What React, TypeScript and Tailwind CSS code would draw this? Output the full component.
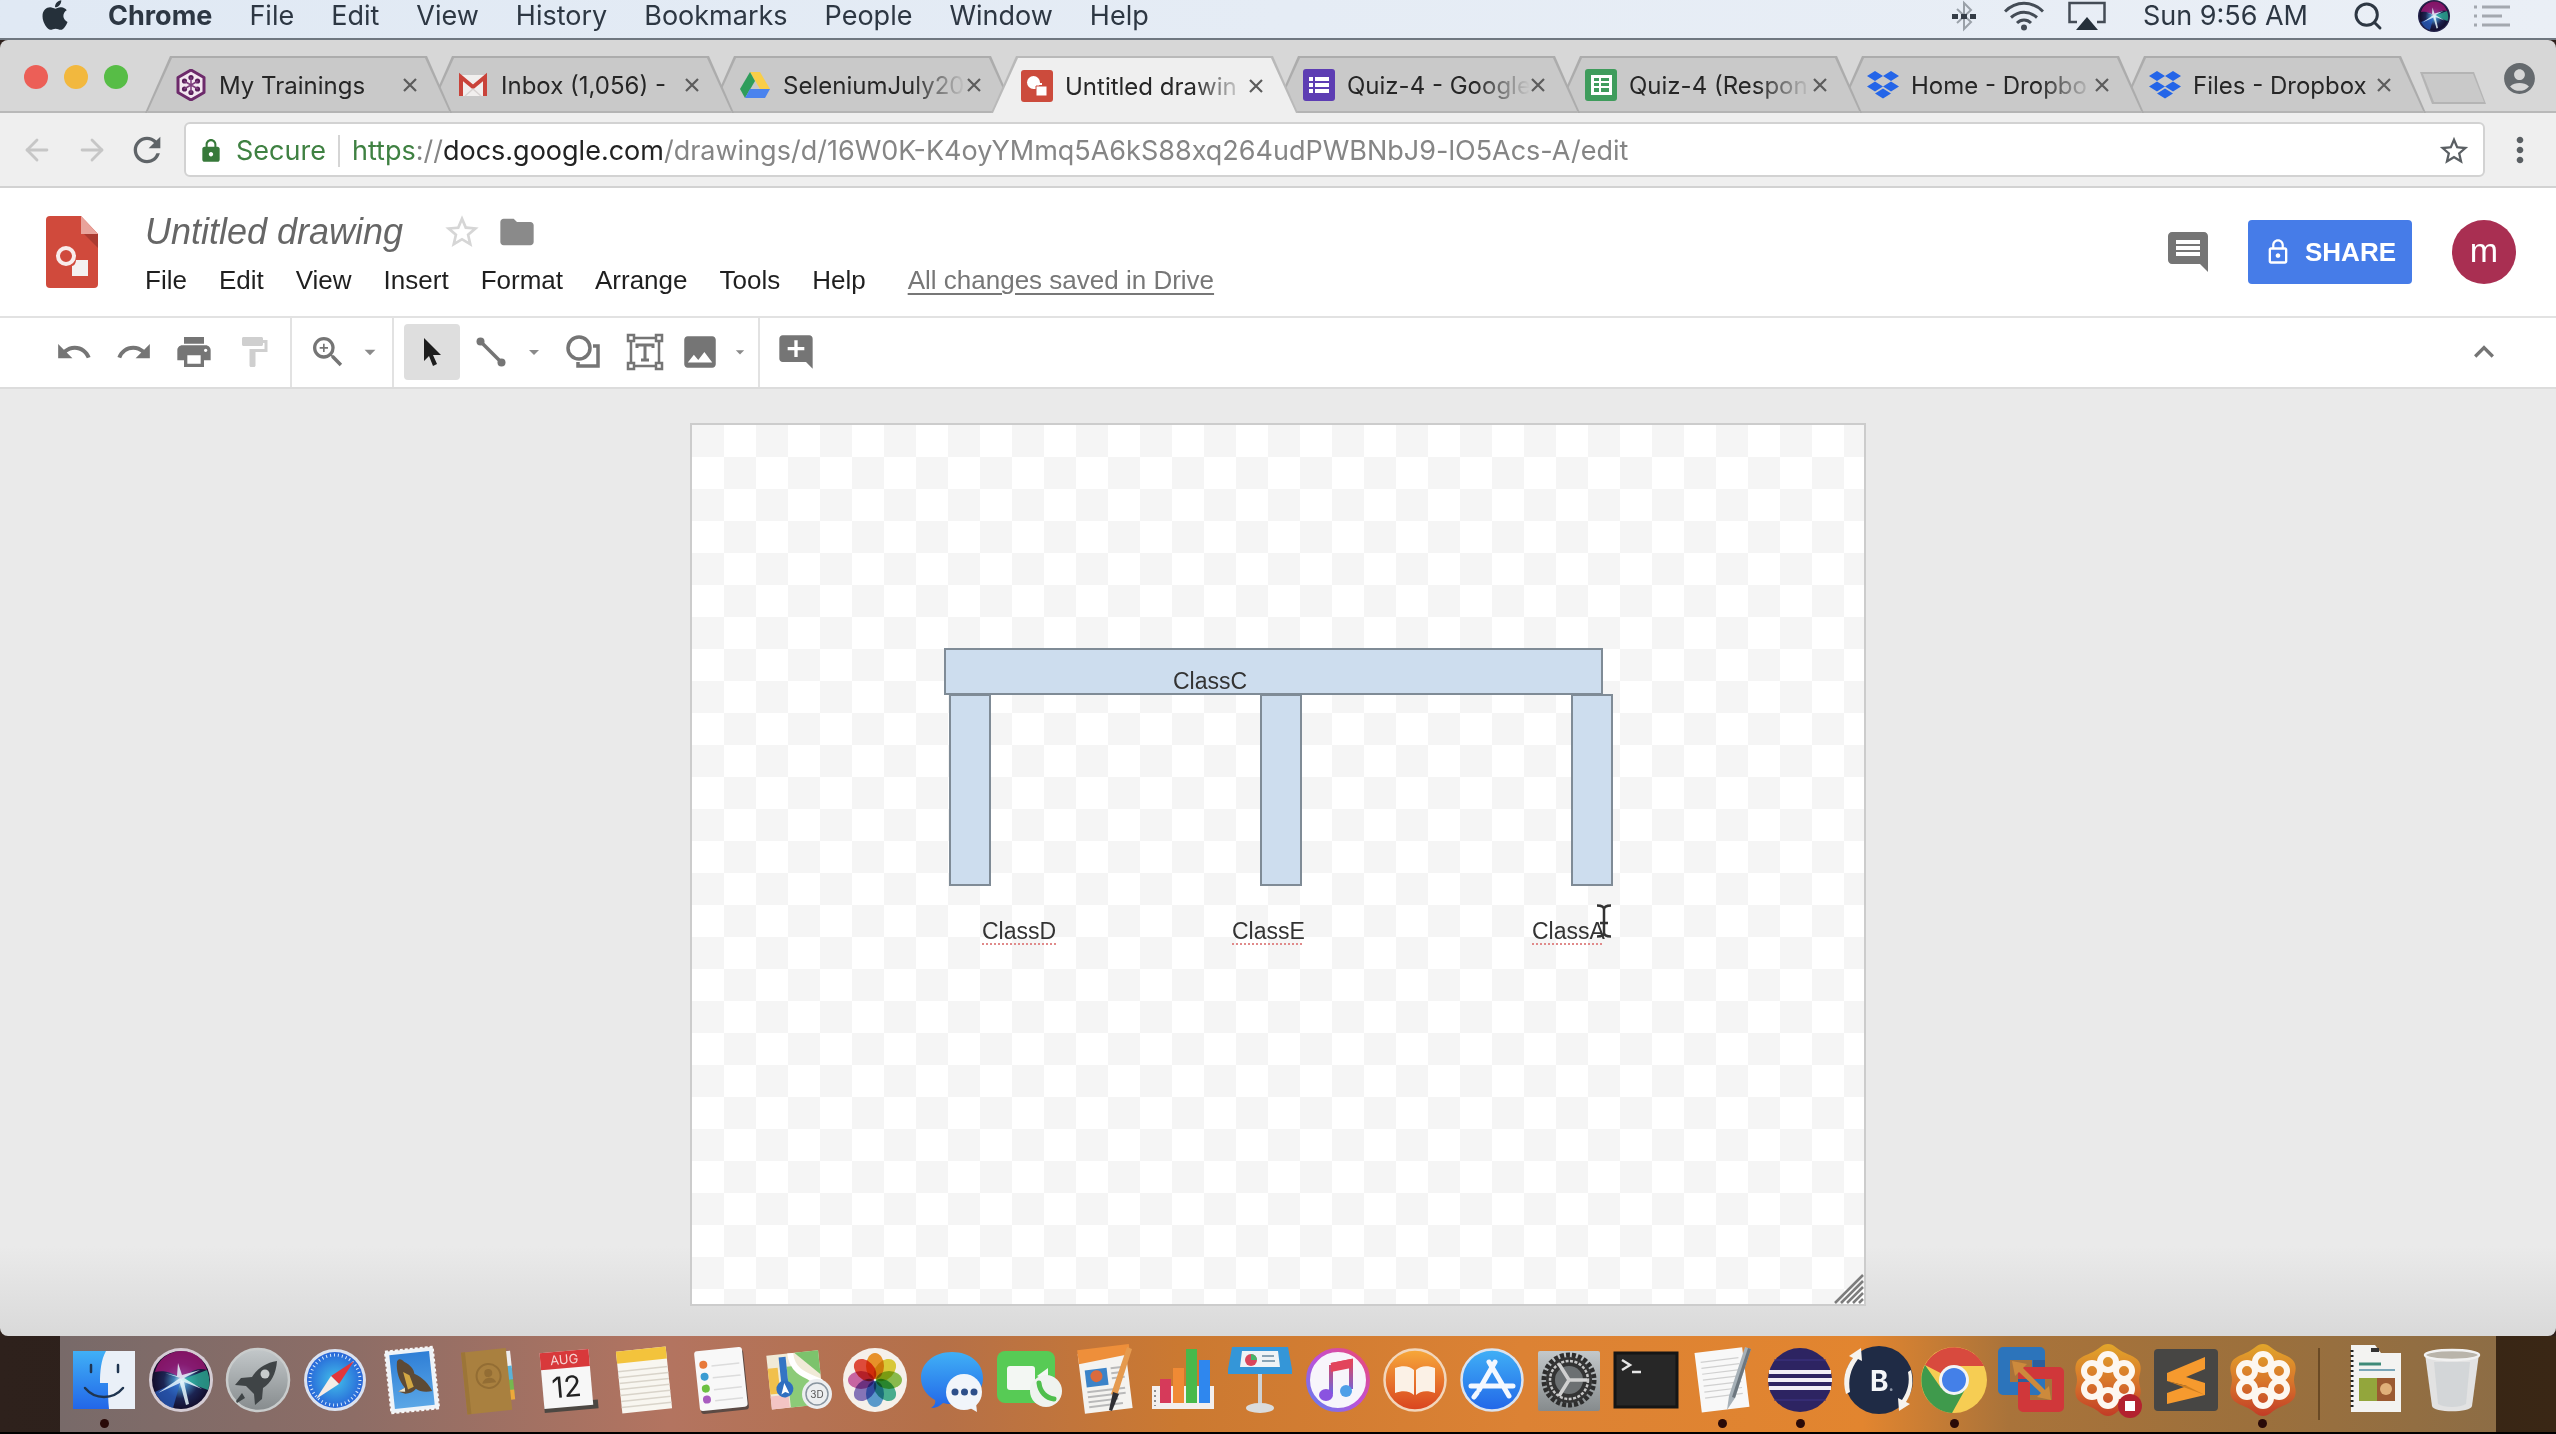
import React from 'react';
import {
  MdUndo, MdRedo, MdPrint, MdFormatPaint, MdZoomIn, MdArrowDropDown, MdPhoto, MdAddComment, MdComment,
  MdLock, MdLockOutline, MdStarBorder, MdFolder, MdRefresh, MdMoreVert, MdAccountCircle, MdKeyboardArrowUp,
} from 'react-icons/md';
import { FaApple } from 'react-icons/fa';
import { ArrowLeft, ArrowRight, Search } from 'lucide-react';

/* ---------- macOS menu bar ---------- */

const SiriOrb = ({ id, rim }: { id: string; rim?: boolean }) => (
  <svg viewBox="0 0 64 64" className="size-full">
    <defs>
      <radialGradient id={id} cx="50%" cy="52%" r="50%">
        <stop offset="0" stopColor="#d9f6ff" />
        <stop offset=".25" stopColor="#3f7fb4" />
        <stop offset=".6" stopColor="#1c2452" />
        <stop offset="1" stopColor="#120c2a" />
      </radialGradient>
    </defs>
    <circle cx="32" cy="32" r="32" fill={rim ? '#d5ccd4' : '#22224a'} />
    <circle cx="32" cy="32" r="29" fill={`url(#${id})`} />
    <path d="M6 24C10 8 24 3 33 3c13 0 22 9 25 19-12-4-18 4-26 9C24 24 14 22 6 24Z" fill="#b3187f" opacity=".7" />
    <path d="M32 32 58 22c3 8 3 14 1 20Z" fill="#2fc0a0" opacity=".7" />
    <path d="M32 32 6 44c4 8 10 14 18 16Z" fill="#2a62c8" opacity=".7" />
    <path d="M31 30 9 45l22-10 6 22 3-1-5-22 18 7-18-11 16-8-18 5-4-12-1 13-12-3Z" fill="#e6f6fc" opacity=".85" />
  </svg>
);

const menuItems = ['File', 'Edit', 'View', 'History', 'Bookmarks', 'People', 'Window', 'Help'];

function MenuBar() {
  return (
    <header className="flex h-[40px] shrink-0 items-center border-b-2 border-[#6f7780] bg-gradient-to-r from-[#e0e9f4] to-[#eaeff6] pr-[46px] pl-[38px] text-[27px] text-[#2d3743]">
      <button aria-label="Apple menu" className="mb-2 w-[34px]">
        <FaApple size={34} color="#25303a" />
      </button>
      <nav className="mb-[6px] ml-[36px] flex items-center gap-[37px] leading-8">
        <button className="font-bold">Chrome</button>
        {menuItems.map((m) => (
          <button key={m}>{m}</button>
        ))}
      </nav>
      <div className="mb-[6px] ml-auto flex items-center leading-8">
        <button aria-label="Bluetooth" className="mr-7">
          <svg viewBox="0 0 24 32" className="h-8 w-6">
            <path d="m5 9 14 13-7 7V3l7 7L5 23" fill="none" stroke="#9aa1a9" strokeWidth="2" />
            <path d="M0 14h6v5H0zM9 14h6v5H9zM18 14h6v5h-6z" fill="#353d47" />
          </svg>
        </button>
        <button aria-label="Wi-Fi" className="mr-6">
          <svg viewBox="0 0 40 30" className="h-[30px] w-10" fill="none" stroke="#444c56" strokeWidth="3">
            <path d="M1 10.500c11-11 27-11 38 0M7 16.500c8-7 18-7 26 0M13 22c4-4 10-4 14 0" />
            <circle cx="20" cy="26.500" r="3" fill="#444c56" stroke="none" />
          </svg>
        </button>
        <button aria-label="AirPlay" className="mr-[37px]">
          <svg viewBox="0 0 38 30" className="h-[30px] w-[38px]">
            <path d="M9 21H1.500V2h35v19H29" fill="none" stroke="#444c56" strokeWidth="2.500" />
            <path d="m19 16 11 13H8Z" fill="#25303a" />
          </svg>
        </button>
        <button>Sun 9:56 AM</button>
        <button aria-label="Spotlight" className="ml-11">
          <Search size={32} strokeWidth={2.200} />
        </button>
        <button aria-label="Siri" className="ml-[34px] size-8">
          <SiriOrb id="siri-menu" />
        </button>
        <button aria-label="Notification Center" className="ml-6">
          <svg viewBox="0 0 36 24" className="h-6 w-9" stroke="#a3a8af" strokeWidth="3">
            <path d="M0 3h3M8 3h28M0 12h3M8 12h20M0 21h3M8 21h28" />
          </svg>
        </button>
      </div>
    </header>
  );
}

/* ---------- Browser tab icons ---------- */

const fav = {
  training: (
    <svg viewBox="0 0 32 32">
      <path d="m16 1 13 7.500v15L16 31 3 23.500v-15Z" fill="#f3e6f0" stroke="#6d2a6b" strokeWidth="3" strokeLinejoin="round" />
      <g fill="#5a1f5c">
        <circle cx="16" cy="8.500" r="2.600" /><circle cx="16" cy="23.500" r="2.600" /><circle cx="9.500" cy="12" r="2.600" />
        <circle cx="22.500" cy="12" r="2.600" /><circle cx="9.500" cy="20" r="2.600" /><circle cx="22.500" cy="20" r="2.600" />
      </g>
      <path d="M16 8v16M9 12l14 8M23 12 9 20" stroke="#7d3d7c" strokeWidth="1.500" />
    </svg>
  ),
  gmail: (
    <svg viewBox="0 0 32 32">
      <path d="M2 6h28v21H2z" fill="#f1efee" />
      <path d="M4 27V8l12 10L28 8v19" fill="none" stroke="#c9433a" strokeWidth="4" />
      <path d="m8 27 8-7 8 7" fill="none" stroke="#d8d3d2" strokeWidth="1.500" />
    </svg>
  ),
  drive: (
    <svg viewBox="0 0 32 32">
      <path d="M11 3h10l10 17H21Z" fill="#f9ce48" />
      <path d="M11 3 1 20l5 9 10-17Z" fill="#2f9d5b" />
      <path d="M11 20h20l-5 9H6Z" fill="#4a83ee" />
    </svg>
  ),
  drawing: (
    <svg viewBox="0 0 32 32">
      <rect width="32" height="32" rx="3" fill="#cc4b3c" />
      <circle cx="12.500" cy="12.500" r="6.500" fill="#fff" />
      <path d="M12 13v6h3v-4h6v-2" fill="#fff" />
      <path d="M15 16h11v10H15z" fill="#fff" stroke="#cc4b3c" strokeWidth="1" />
    </svg>
  ),
  form: (
    <svg viewBox="0 0 32 32">
      <rect width="32" height="32" rx="3" fill="#5d3db3" />
      <path d="M6 8h4v4H6zM12 8h14v4H12zM6 14h4v4H6zM12 14h14v4H12zM6 20h4v4H6zM12 20h14v4H12z" fill="#fff" />
    </svg>
  ),
  sheet: (
    <svg viewBox="0 0 32 32">
      <rect width="32" height="32" rx="3" fill="#3f9c5c" />
      <path d="M6 6h21v20H6z" fill="#fff" />
      <path d="M9 9h5v3H9zM16 9h8v3h-8zM9 14h5v3H9zM16 14h8v3h-8zM9 19h5v4H9zM16 19h8v4h-8z" fill="#3f9c5c" />
    </svg>
  ),
  dropbox: (
    <svg viewBox="0 0 32 32" fill="#2465e8">
      <path d="M8 2l8 5-8 5-8-5ZM24 2l8 5-8 5-8-5ZM8 12.500l8 5-8 5-8-5ZM24 12.500l8 5-8 5-8-5ZM16 19.500l8 5-8 5-8-5Z" />
    </svg>
  ),
};

const fade = '[mask-image:linear-gradient(to_right,#000_70%,transparent)]';

const tabs = [
  { icon: fav.training, label: 'My Trainings', z: 'z-[8]' },
  { icon: fav.gmail, label: 'Inbox (1,056) -', z: 'z-[7]' },
  { icon: fav.drive, label: 'SeleniumJuly20', z: 'z-[6]', long: true },
  { icon: fav.drawing, label: 'Untitled drawin', z: 'z-[9]', active: true, long: true },
  { icon: fav.form, label: 'Quiz-4 - Google', z: 'z-[5]', long: true },
  { icon: fav.sheet, label: 'Quiz-4 (Respon', z: 'z-[4]', long: true },
  { icon: fav.dropbox, label: 'Home - Dropbo', z: 'z-[3]', long: true },
  { icon: fav.dropbox, label: 'Files - Dropbox', z: 'z-[2]' },
];

const tabClip = '[clip-path:polygon(25px_0,calc(100%-25px)_0,100%_100%,0_100%)]';

function Tab({ icon, label, z, active, long }: { icon: React.ReactNode; label: string; z: string; active?: boolean; long?: boolean }) {
  return (
    <div className={`relative -mr-[25px] h-[57px] w-[307px] min-w-0 px-[2px] pt-[2px] ${z} ${tabClip} ${active ? 'bg-[#b9b9b9]' : 'bg-[#acacac]'}`}>
      <div className={`flex h-full items-center pr-[32px] pl-[28px] ${tabClip} ${active ? 'bg-[#efefef]' : 'border-b-2 border-[#b4b4b4] bg-[#c9c9c9]'}`}>
        <span className="size-8 shrink-0">{icon}</span>
        <button className={`mt-[2px] ml-3 min-w-0 flex-1 text-left text-[24px] leading-8 whitespace-nowrap text-[#262626] ${long ? fade : ''}`}>
          {label}
        </button>
        <button aria-label={`Close ${label}`} className="shrink-0">
          <svg viewBox="0 0 16 16" className="size-4" stroke="#5c5c5c" strokeWidth="2.200">
            <path d="m2 2 12 12M14 2 2 14" />
          </svg>
        </button>
      </div>
    </div>
  );
}

function BrowserChrome() {
  return (
    <div className="shrink-0 rounded-t-lg bg-[#d7d7d7]">
      <div className="flex h-[73px] items-end border-b-2 border-[#b9b9b9]">
        <div className="mb-[22px] ml-6 flex gap-4">
          <button aria-label="Close window" className="size-6 rounded-full bg-[#ec5f57]" />
          <button aria-label="Minimise window" className="size-6 rounded-full bg-[#f2b83e]" />
          <button aria-label="Zoom window" className="size-6 rounded-full bg-[#57bd46]" />
        </div>
        <div className="-mb-[2px] ml-[17px] flex">
          {tabs.map((t) => (
            <Tab key={t.label} {...t} />
          ))}
        </div>
        <button aria-label="New tab" className="mb-[7px] ml-[19px] h-8 w-[66px] bg-[#b4b4b4] p-[2px] [clip-path:polygon(0_0,54px_0,100%_100%,12px_100%)]">
          <span className="block size-full bg-[#c9c9c9] [clip-path:polygon(1px_0,51px_0,100%_100%,12px_100%)]" />
        </button>
        <button aria-label="Profile" className="mr-[18px] mb-[14px] ml-auto">
          <MdAccountCircle size={37} color="#656a6e" />
        </button>
      </div>
      <div className="flex h-[75px] items-center border-b-2 border-[#d2d2d2] bg-[#efefef]">
        <button aria-label="Back" className="ml-[20px]"><ArrowLeft size={34} strokeWidth={2} color="#c6c6c6" /></button>
        <button aria-label="Forward" className="ml-[21px]"><ArrowRight size={34} strokeWidth={2} color="#c6c6c6" /></button>
        <button aria-label="Reload" className="ml-[18px]"><MdRefresh size={40} color="#5f6468" /></button>
        <div className="ml-[17px] flex h-[55px] flex-1 items-center rounded-md border-2 border-[#d2d2d2] bg-white pt-[2px] pr-3 pl-3 text-[27px] leading-9">
          <MdLock size={26} color="#37793a" />
          <span className="ml-3 text-[#3f8142]">Secure</span>
          <span className="ml-3 h-8 w-[2px] bg-[#d5d5d5]" />
          <div
            contentEditable
            suppressContentEditableWarning
            role="textbox"
            aria-label="Address"
            className="ml-3 flex-1 whitespace-nowrap text-[#858585]"
          >
            <span className="text-[#3f8142]">https</span>://<span className="text-[#222]">docs.google.com</span>
            /drawings/d/16W0K-K4oyYMmq5A6kS88xq264udPWBNbJ9-lO5Acs-A/edit
          </div>
          <button aria-label="Bookmark this page"><MdStarBorder size={34} color="#5a5f63" /></button>
        </div>
        <button aria-label="Browser menu" className="mr-[16px] ml-[15px]"><MdMoreVert size={40} color="#5a5f63" /></button>
      </div>
    </div>
  );
}

/* ---------- Drawings application ---------- */

const docMenus = ['File', 'Edit', 'View', 'Insert', 'Format', 'Arrange', 'Tools', 'Help'];

function DocHeader() {
  return (
    <div className="flex h-[130px] shrink-0 items-start border-b-2 border-[#e2e2e2] bg-white font-['Liberation_Sans',Arial,sans-serif]">
      <svg viewBox="0 0 52 72" className="mt-7 ml-[46px] h-[72px] w-[52px]">
        <path d="M4 0h31l17 18v50a4 4 0 0 1-4 4H4a4 4 0 0 1-4-4V4a4 4 0 0 1 4-4Z" fill="#d04a3c" />
        <path d="M35 0 52 18H35Z" fill="#e9a39b" />
        <path d="M38 18h14v14Z" fill="#ab3b31" />
        <circle cx="20" cy="40" r="8" fill="none" stroke="#f8eceb" strokeWidth="4" />
        <path d="M30 44h12v16H26V50c2 0 4-3 4-6Z" fill="#f4f1f0" />
      </svg>
      <div className="mt-[21px] ml-[47px]">
        <div className="flex h-[46px] items-center">
          <input aria-label="Document name" defaultValue="Untitled drawing" className="w-[294px] bg-transparent p-0 text-[36px] leading-[46px] text-[#666] italic outline-none" />
          <button aria-label="Star" className="ml-[3px]"><MdStarBorder size={40} color="#d6d6d6" /></button>
          <button aria-label="Move to folder" className="ml-[15px]"><MdFolder size={40} color="#8a8a8a" /></button>
        </div>
        <nav className="mt-[9px] flex gap-8 text-[26px] leading-8 text-[#1f1f1f]">
          {docMenus.map((m) => (
            <button key={m}>{m}</button>
          ))}
          <a href="#history" className="ml-[10px] text-[#777] underline decoration-2 underline-offset-4">All changes saved in Drive</a>
        </nav>
      </div>
      <div className="mt-[32px] mr-[40px] ml-auto flex items-center">
        <button aria-label="Comments" className="mr-[36px]"><MdComment size={48} color="#757575" /></button>
        <button className="flex h-16 items-center rounded-sm bg-[#467ce8] pr-4 pl-4 text-[26px] leading-8 font-bold text-white">
          <MdLockOutline size={28} className="mr-[13px]" />
          SHARE
        </button>
        <button aria-label="Account" className="ml-10 size-16 rounded-full bg-[#a92f52] pb-1 text-[34px] leading-10 text-white">m</button>
      </div>
    </div>
  );
}

const grey = '#757575';
const Drop = () => <MdArrowDropDown size={26} color="#8a8a8a" />;
const tool = 'flex h-14 items-center justify-center';

function Toolbar() {
  return (
    <div className="flex h-[71px] shrink-0 items-stretch border-b-2 border-[#dcdcdc] bg-white pb-[2px]">
      <div className="-mb-[2px] flex items-center border-r-2 border-[#e2e2e2] pr-[6px] pb-[2px] pl-11">
        <button aria-label="Undo" className={`${tool} w-[60px]`}><MdUndo size={38} color={grey} /></button>
        <button aria-label="Redo" className={`${tool} w-[60px]`}><MdRedo size={38} color={grey} /></button>
        <button aria-label="Print" className={`${tool} w-[60px]`}><MdPrint size={40} color={grey} /></button>
        <button aria-label="Paint format" className={`${tool} w-[60px]`}><MdFormatPaint size={36} color="#cfcfcf" /></button>
      </div>
      <div className="-mb-[2px] flex items-center border-r-2 border-[#e2e2e2] px-2 pb-[2px]">
        <button aria-label="Zoom" className={`${tool} w-14`}><MdZoomIn size={40} color={grey} /></button>
        <button aria-label="Zoom options" className={`${tool} w-7`}><Drop /></button>
      </div>
      <div className="-mb-[2px] flex items-center border-r-2 border-[#e2e2e2] pr-2 pb-[2px] pl-[10px]">
        <button aria-label="Select" className={`${tool} w-14 rounded-sm bg-[#dedede]`}>
          <svg viewBox="0 0 20 30" className="h-[30px] w-5"><path d="M2 1v23l5-5 4 10 4-2-4-9h8Z" fill="#1d1d1d" /></svg>
        </button>
        <button aria-label="Line" className={`${tool} w-[62px]`}>
          <svg viewBox="0 0 30 30" className="size-[30px]">
            <path d="m4 4 22 22" stroke={grey} strokeWidth="3.500" />
            <circle cx="4.500" cy="4.500" r="4" fill={grey} /><circle cx="25.500" cy="25.500" r="4" fill={grey} />
          </svg>
        </button>
        <button aria-label="Line options" className={`${tool} w-6`}><Drop /></button>
        <button aria-label="Shape" className={`${tool} w-[74px]`}>
          <svg viewBox="0 0 34 34" className="size-[34px]" fill="none" stroke={grey} strokeWidth="3.500">
            <circle cx="13" cy="13" r="11" />
            <path d="M27 11h5v20H12v-4" />
          </svg>
        </button>
        <button aria-label="Text box" className={`${tool} w-[50px]`}>
          <svg viewBox="0 0 38 38" className="size-[38px]" fill="none" stroke={grey} strokeWidth="2.500">
            <path d="M5 5h28v28H5z" />
            <path d="M11 15v-3h16v3M19 12v15M15 27h8" strokeWidth="3" />
            <path d="M2 2h6v6H2zM30 2h6v6h-6zM2 30h6v6H2zM30 30h6v6h-6z" fill="#fff" />
          </svg>
        </button>
        <button aria-label="Image" className={`${tool} w-[60px]`}><MdPhoto size={42} color={grey} /></button>
        <button aria-label="Image options" className={`${tool} w-5`}><Drop /></button>
      </div>
      <button aria-label="Add comment" className={`${tool} w-[72px] self-center`}><MdAddComment size={40} color={grey} /></button>
      <button aria-label="Hide menus" className="mr-[52px] ml-auto"><MdKeyboardArrowUp size={40} color="#757575" /></button>
    </div>
  );
}

const shape = 'absolute border-2 border-[#7f8b96] bg-[#cdddee]';
const label = 'absolute text-[23px] leading-7 text-[#333]';
const misspelt = 'underline decoration-[#e08a8a] decoration-dotted decoration-2 underline-offset-4';

function Canvas() {
  return (
    <main className="flex-1 rounded-b-lg bg-[linear-gradient(to_top,#d9d9d9,#eaeaea_90px)] pt-[34px] pb-[30px] font-['Liberation_Sans',Arial,sans-serif]">
      <div className="relative mx-auto h-[883px] w-[1176px] border-2 border-[#cccccc] bg-[repeating-conic-gradient(#fff_0_25%,#f5f5f5_0_50%)] bg-[length:64px_64px]">
        <div className={`${shape} top-[223px] left-[252px] h-[47px] w-[659px]`} />
        <div className={`${shape} top-[269px] left-[257px] h-[192px] w-[42px]`} />
        <div className={`${shape} top-[269px] left-[568px] h-[192px] w-[42px]`} />
        <div className={`${shape} top-[269px] left-[879px] h-[192px] w-[42px]`} />
        <span className={`${label} top-[242px] left-[481px]`}>ClassC</span>
        <span className={`${label} ${misspelt} top-[492px] left-[290px]`}>ClassD</span>
        <span className={`${label} ${misspelt} top-[492px] left-[540px]`}>ClassE</span>
        <span className={`${label} ${misspelt} top-[492px] left-[840px]`}>ClassA</span>
        <svg viewBox="0 0 16 34" className="absolute top-[479px] left-[904px] h-[34px] w-4" fill="none" stroke="#333" strokeWidth="2.500">
          <path d="M1 1.500c4 0 7 1 7 4 0-3 3-4 7-4M8 5v24M4 19h8M1 32.500c4 0 7-1 7-4 0 3 3 4 7 4" />
        </svg>
        <svg viewBox="0 0 30 30" className="absolute right-0 bottom-0 size-[30px]" stroke="#7d7d7d" strokeWidth="2.500">
          <path d="M1 29 29 1M7 29 29 7M13 29l16-16M19 29l10-10M25 29l4-4" />
        </svg>
      </div>
    </main>
  );
}

/* ---------- Dock ---------- */

const Gear = () => (
  <>
    <circle cx="32" cy="32" r="25" fill="none" stroke="#2d2d2d" strokeWidth="5" strokeDasharray="4 2" />
    <circle cx="32" cy="32" r="23" fill="#333" />
    <circle cx="32" cy="32" r="19" fill="none" stroke="#c6c6c6" strokeWidth="2.500" strokeDasharray="3 1.500" />
    <circle cx="32" cy="32" r="14" fill="#6c7072" />
    <path d="M32 32 22 16M32 32h18M32 32 22 48" stroke="#d0d0d0" strokeWidth="3.500" />
  </>
);

const Petals = ({ badge }: { badge?: boolean }) => (
  <>
    <path d="M32-4c6 0 9 5 15 8s15 5 17 12-1 10-1 16 3 9 1 16-11 9-17 12-9 8-15 8-9-5-15-8S2 55 0 48s1-10 1-16-3-9-1-16S11 7 17 4s9-8 15-8Z" fill="url(#goto)" />
    <g fill="none" stroke="#fdf7f0" strokeWidth="6">
      <circle cx="32" cy="14" r="8" /><circle cx="32" cy="50" r="8" />
      <circle cx="16" cy="23" r="8" /><circle cx="48" cy="23" r="8" />
      <circle cx="16" cy="41" r="8" /><circle cx="48" cy="41" r="8" />
    </g>
    {badge && (
      <>
        <circle cx="54" cy="58" r="12" fill="#b3222f" />
        <path d="M49 53h10v10H49z" fill="#fff" />
      </>
    )}
  </>
);

const dock: { name: string; running?: boolean; art: React.ReactNode }[] = [
  { name: 'Finder', running: true, art: (<>
    <path d="M1 3h62v58H1z" fill="#eaf0f8" />
    <path d="M1 3h33c-5 9-6 20-6 32h8c0 9 0 18 1 26H1Z" fill="url(#finder)" />
    <path d="M13 40c10 12 28 12 38 0M19 17v7M46 17v7" fill="none" stroke="#1f3550" strokeWidth="2.500" strokeLinecap="round" />
  </>) },
  { name: 'Siri', art: <g><SiriOrb id="siri-dock" rim /></g> },
  { name: 'Launchpad', art: (<>
    <circle cx="32" cy="32" r="31" fill="url(#silver)" stroke="#c9cccc" strokeWidth="2.500" />
    <path d="M51 13c-12 2-20 8-25 16l-11 1-6 7 11 1 8 8 1 11 7-6 1-11c8-5 13-14 14-27ZM16 45l-6 8 1 2 8-5Z" fill="#3f4446" />
    <circle cx="39" cy="26" r="4.500" fill="#c7cccc" />
  </>) },
  { name: 'Safari', art: (<>
    <circle cx="32" cy="32" r="31" fill="#dbe2f0" />
    <circle cx="32" cy="32" r="28" fill="url(#safari)" />
    <circle cx="32" cy="32" r="25" fill="none" stroke="#d7e9fa" strokeWidth="3" strokeDasharray="1 3" />
    <path d="m51 13-15 23-8-8Z" fill="#e2363b" /><path d="m13 51 15-23 8 8Z" fill="#f5ece6" />
  </>) },
  { name: 'Mail', art: (<g transform="rotate(-6 32 32)">
    <path d="M8 1h48v62H8z" fill="#eef3f8" stroke="#f7f7f7" strokeWidth="2" strokeDasharray="3 2" />
    <path d="M12 5h40v54H12z" fill="url(#sky)" />
    <path d="M19 12c2-3 5-2 7 1 6 4 9 8 9 13 8 5 13 11 16 19-7 1-13-1-16-4-3 3-7 4-11 4l-7-3 7-3c-5-8-7-17-5-27Z" fill="#5d4a35" />
    <path d="m24 23 6 4 3 12-6 2Z" fill="#d2a743" /><path d="m17 42 7-3v4Z" fill="#efe5cd" />
  </g>) },
  { name: 'Contacts', art: (<g transform="rotate(-6 32 32)">
    <path d="M50 5h6v18h-6z" fill="#eee" /><path d="M50 20h6v14h-6z" fill="#5bb2d8" /><path d="M50 34h6v14h-6z" fill="#76b84f" /><path d="M50 44h6v10h-6z" fill="#eda93a" />
    <path d="M7 2h45v62H7z" fill="#a9803f" /><path d="M7 2h4v62H7z" fill="#9c7538" />
    <circle cx="32" cy="28" r="12" fill="none" stroke="#936d34" strokeWidth="2" /><circle cx="32" cy="25" r="4" fill="#936d34" /><path d="M25 35c2-7 12-7 14 0Z" fill="#936d34" />
  </g>) },
  { name: 'Calendar', art: (<g transform="rotate(-5 32 32)">
    <path d="M7 54h54v9H7z" fill="#4c4742" /><path d="M7 3h49v56H7z" fill="#f7f7f7" /><path d="M7 3h49v17H7z" fill="#d8393b" />
    <text x="31" y="16" textAnchor="middle" fontSize="13" fill="#f5d5d3">AUG</text>
    <text x="31" y="49" textAnchor="middle" fontSize="29" fill="#222">12</text>
  </g>) },
  { name: 'Notes', art: (<g transform="rotate(-6 32 32)">
    <path d="M7 1h50v62H7z" fill="#f8f6f0" /><path d="M7 1h50v12H7z" fill="#f3c33c" />
    <path d="M7 21h50M7 27h50M7 33h50M7 39h50M7 45h50M7 51h50M7 57h50" stroke="#d9d4ca" strokeWidth="1.500" />
  </g>) },
  { name: 'Reminders', art: (<g transform="rotate(-6 32 32)">
    <rect x="9" y="4" width="48" height="60" rx="3" fill="#5b4a44" /><rect x="8" y="1" width="48" height="60" rx="3" fill="#f8f8f8" />
    <circle cx="16" cy="15" r="4" fill="#e8793a" /><circle cx="16" cy="27" r="4" fill="#3b9cd2" /><circle cx="16" cy="39" r="4" fill="#6cc142" /><circle cx="16" cy="50" r="4" fill="#a85cc0" />
    <path d="M24 17h28M24 29h28M24 41h28M24 52h28" stroke="#dcdcdc" strokeWidth="1.500" />
  </g>) },
  { name: 'Maps', art: (<>
    <g transform="rotate(-6 28 32)">
      <path d="M3 5h52v54H3z" fill="#f0ead7" /><path d="M31 5h24v24Z" fill="#7cc36c" /><path d="M22 18h9l22 30v11H22Z" fill="#8ccb78" />
      <path d="M3 18h10v26H3z" fill="#f1c04c" /><path d="M3 46h18v13H3z" fill="#f3c4c4" /><path d="M27 5c0 20 15 24 28 32" stroke="#fff" strokeWidth="6" fill="none" />
      <path d="M15 8h7v28h-7z" fill="#3475c4" /><circle cx="18" cy="40" r="8.500" fill="#2f6fc0" /><path d="m18 34 4 11-4-2-4 2Z" fill="#fff" />
    </g>
    <circle cx="51" cy="46" r="15" fill="#eceef0" /><circle cx="51" cy="46" r="11" fill="none" stroke="#8995a0" strokeWidth="1.500" />
    <text x="51" y="50" textAnchor="middle" fontSize="10" fill="#555">3D</text>
  </>) },
  { name: 'Photos', art: (<>
    <circle cx="32" cy="32" r="32" fill="#f5f0ea" />
    {['#f29a2c', '#e2d53c', '#8fc653', '#4bb79a', '#5ea3dc', '#8a7bc8', '#cf6bb0', '#e7503f'].map((c, i) => (
      <ellipse key={c} cx="32" cy="18" rx="9" ry="13" fill={c} className="mix-blend-multiply" transform={`rotate(${i * 45} 32 32)`} />
    ))}
  </>) },
  { name: 'Messages', art: (<>
    <path d="M32 4c18 0 31 11 31 26S50 56 32 56c-3 0-6 0-9-1-3 3-7 5-12 5 3-2 5-5 4-8C6 47 1 39 1 30 1 15 14 4 32 4Z" fill="url(#finder)" />
    <circle cx="44" cy="44" r="18" fill="#f1f5fa" /><path d="m50 60 7 4-1-9Z" fill="#f1f5fa" />
    <circle cx="35" cy="44" r="3.500" fill="#2d4f8a" /><circle cx="44.500" cy="44" r="3.500" fill="#2d4f8a" /><circle cx="54" cy="44" r="3.500" fill="#2d4f8a" />
  </>) },
  { name: 'FaceTime', art: (<>
    <rect x="0" y="3" width="58" height="52" rx="8" fill="#57cb55" /><rect x="10" y="18" width="28" height="24" rx="3" fill="#f3f7f3" /><path d="m40 28 11-8v14Z" fill="#f3f7f3" />
    <circle cx="49" cy="43" r="16" fill="#eff3ef" />
    <path d="M42 35c1 9 7 15 15 16" stroke="#4fbf4d" strokeWidth="5" fill="none" strokeLinecap="round" />
  </>) },
  { name: 'Pages', art: (<>
    <g transform="rotate(-7 32 32)">
      <path d="M7 3h48v60H7z" fill="#f4f3f0" /><path d="M7-1h52v10l-52 4Z" fill="#ee8f3a" /><path d="M12 20h22v17H12z" fill="#3b83c8" /><circle cx="23" cy="27" r="6" fill="#db6b3d" />
      <path d="M38 21h13M38 26h13M38 31h13M12 42h38M12 47h38M12 52h30M12 57h34" stroke="#b9b9b9" strokeWidth="2" />
    </g>
    <path d="m53-1 5 2-15 47-6-2Z" fill="#e59a4e" /><path d="m39 44 6 2-7 17-3-1Z" fill="#2f2f33" />
  </>) },
  { name: 'Numbers', art: (<>
    <path d="M1 38h62v23H1z" fill="#f3efed" /><path d="M4 42v16" stroke="#8e8e8e" strokeWidth="2" strokeDasharray="2 3" />
    <path d="M9 31h11v24H9z" fill="#d63a5a" /><path d="M22 20h11v35H22z" fill="#f08a35" /><path d="M35 1h11v54H35z" fill="#48b94b" /><path d="M48 12h11v43H48z" fill="#2f87ee" />
  </>) },
  { name: 'Keynote', art: (<>
    <path d="M30 24h4v34h-4z" fill="#cfd2d4" /><ellipse cx="32" cy="60" rx="14" ry="5" fill="#dadcdd" /><path d="M4-1h56l4 22v5H0v-5Z" fill="#3496d8" />
    <path d="M14 3h36l2 16H12Z" fill="#eef3f6" /><circle cx="23" cy="12" r="6" fill="#d9465c" /><path d="M23 12V6a6 6 0 0 1 6 6Z" fill="#45b56a" /><path d="M34 8h12M34 13h13" stroke="#87a3b5" strokeWidth="2" />
  </>) },
  { name: 'iTunes', art: (<>
    <circle cx="32" cy="32" r="30" fill="#f7f5fb" stroke="url(#tunes)" strokeWidth="4" />
    <path d="m25 17 20-4v28M25 17v29" fill="none" stroke="url(#note)" strokeWidth="4" /><path d="m25 15 20-4v9l-20 4Z" fill="#e2455c" />
    <ellipse cx="20" cy="47" rx="7" ry="6" fill="#8a53e0" /><ellipse cx="40" cy="43" rx="6" ry="6" fill="#4f9fe8" />
  </>) },
  { name: 'iBooks', art: (<>
    <circle cx="32" cy="32" r="30.500" fill="url(#books)" stroke="#f2d6bb" strokeWidth="2.500" />
    <path d="M12 20c8-3 15-2 19 2v25c-4-4-11-5-19-2ZM52 20c-8-3-15-2-19 2v25c4-4 11-5 19-2Z" fill="#fbf1e6" />
  </>) },
  { name: 'App Store', art: (<>
    <circle cx="32" cy="32" r="30.500" fill="url(#finder)" stroke="#dbe3ef" strokeWidth="2.500" />
    <path d="M35 14 19 42M29 14l20 34M11 38h42M17 45l-3 4" stroke="#f3f8ff" strokeWidth="5" strokeLinecap="round" />
  </>) },
  { name: 'System Preferences', art: (<><rect x="1" y="3" width="62" height="60" rx="2" fill="url(#silver)" /><Gear /></>) },
  { name: 'Terminal', art: (<>
    <path d="M1 5h62v54H1z" fill="#272727" stroke="#151515" strokeWidth="3" /><path d="m8 12 8 5-8 5M18 24h9" stroke="#e6e6e6" strokeWidth="2.500" fill="none" />
  </>) },
  { name: 'TextEdit', running: true, art: (<>
    <g transform="rotate(-7 30 32)"><path d="M7 2h48v60H7z" fill="#f8f8f8" /><path d="M12 12h38M12 18h38M12 24h38M12 30h38M12 36h38M12 42h38M12 48h38" stroke="#d0d0d0" strokeWidth="1.200" /></g>
    <path d="m54-1 6 2-16 49-8 12 2-14Z" fill="#a7b1b8" /><path d="m57 0 3 1-16 49-3-1Z" fill="#6d777f" />
  </>) },
  { name: 'Eclipse', running: true, art: (<>
    <circle cx="32" cy="32" r="32" fill="#2d2462" /><path d="M6 12h52M6 52h52" stroke="#3f3585" strokeWidth="1" />
    <path d="M1 24h62M0 32h64M1 40h62" stroke="#f0eff6" strokeWidth="4" />
  </>) },
  { name: 'BlueJeans', art: (<>
    <circle cx="34" cy="32" r="34" fill="#1f2b45" />
    <text x="25" y="43" fontSize="28" fontWeight="700" fill="#f4f6f9">B<tspan fontSize="16" fill="#8d96a8">.</tspan></text>
    <path d="M1 46C-3 32 0 20 8 10L4 8 16 0l1 13-4-2C5 22 3 32 5 44ZM66 22c3 13 1 23-5 32l4 2-11 7-1-13 4 2c6-9 8-18 6-28Z" fill="#f6f3ee" />
  </>) },
  { name: 'Chrome', running: true, art: (<>
    <circle cx="32" cy="32" r="33" fill="#f6cd53" />
    <path d="M32 32 3 17a33 33 0 0 1 59 1H32Z" fill="#d84a3e" /><path d="M3 17a33 33 0 0 0 27 48l15-27-26 2Z" fill="#3f9a4c" />
    <circle cx="32" cy="32" r="15" fill="#f2f4f4" /><circle cx="32" cy="32" r="12" fill="#4480e8" />
  </>) },
  { name: 'VMware Fusion', art: (<>
    <path fillRule="evenodd" d="M4-1h37a5 5 0 0 1 5 5v38a5 5 0 0 1-5 5H4a5 5 0 0 1-5-5V4a5 5 0 0 1 5-5Zm7 13v22h22V12Z" fill="#2c74bb" />
    <path fillRule="evenodd" d="M24 19h36a5 5 0 0 1 5 5v35a5 5 0 0 1-5 5H24a5 5 0 0 1-5-5V24a5 5 0 0 1 5-5Zm7 12v21h22V31Z" fill="#d0373a" />
    <path d="M34 12v7H46v-7ZM19 34h12v-3H19Z" fill="#2c5f9c" />
    <path d="m13 13 15 3-4 4 22 22 4-4 2 14-14-3 4-4-22-21-4 4Z" fill="#cd8a3c" />
  </>) },
  { name: 'GoToMeeting', art: <Petals badge /> },
  { name: 'Sublime Text', art: (<>
    <rect x="0" y="1" width="64" height="62" rx="4" fill="#474644" />
    <path d="m13 25 38-16v12L32 29l19 6v12L13 56V45l20-7-20-5Z" fill="#f69a2e" /><path d="m13 33 38 14-18-9Z" fill="#cf7d1e" />
  </>) },
  { name: 'GoTo Opener', running: true, art: <Petals /> },
];

const DockIcon = ({ name, art }: { name: string; art: React.ReactNode }) => (
  <button aria-label={name} className="block size-16">
    <svg viewBox="0 0 64 64" className="size-16 overflow-visible">{art}</svg>
  </button>
);

function Dock() {
  return (
    <footer className="shrink-0 border-b-2 border-black bg-[linear-gradient(to_right,#2e211c,#241a14_50%,#3a2715)] px-[60px]">
      <svg className="absolute size-0" aria-hidden="true">
        <defs>
          <linearGradient id="finder" x2="0" y2="1"><stop stopColor="#40b0f6" /><stop offset="1" stopColor="#2266e8" /></linearGradient>
          <linearGradient id="sky" x2="0" y2="1"><stop stopColor="#2f7fd6" /><stop offset="1" stopColor="#5aa6e6" /></linearGradient>
          <linearGradient id="silver" x2="0" y2="1"><stop stopColor="#c3c8ca" /><stop offset="1" stopColor="#868b8d" /></linearGradient>
          <radialGradient id="safari"><stop stopColor="#42c0ea" /><stop offset="1" stopColor="#2765d8" /></radialGradient>
          <linearGradient id="tunes" x1="1" x2="0" y2="1"><stop stopColor="#ee4b6b" /><stop offset=".5" stopColor="#c04fd8" /><stop offset="1" stopColor="#5b82f0" /></linearGradient>
          <linearGradient id="note" x2="0" y2="1"><stop stopColor="#e2455c" /><stop offset="1" stopColor="#6a67e4" /></linearGradient>
          <linearGradient id="books" x2="0" y2="1"><stop stopColor="#f7a93a" /><stop offset="1" stopColor="#d9431f" /></linearGradient>
          <linearGradient id="goto" x2="0" y2="1"><stop stopColor="#e2a62a" /><stop offset=".5" stopColor="#d9782b" /><stop offset="1" stopColor="#c23c26" /></linearGradient>
        </defs>
      </svg>
      <div className="flex h-24 items-start justify-between bg-[linear-gradient(to_right,#786a69,#8d6d66_12%,#b37460_25%,#b57048_36%,#cb7931_46%,#dc8234_60%,#e2852f_74%,#a9733a_80%,#9c703c_90%,#8d6d45)] px-3 pt-3">
        {dock.map((d) => (
          <div key={d.name} className="flex flex-col items-center gap-[7px]">
            <DockIcon name={d.name} art={d.art} />
            {d.running && <span className="size-[9px] rounded-full bg-[#2a0a08]" />}
          </div>
        ))}
        <span className="mx-[10px] h-[72px] w-[2px] bg-[#6a4a25]" />
        <DockIcon name="Documents" art={(<>
          <path d="M8-3h24l6 8h20v59H8z" fill="#f3f3f1" /><path d="M9 2v60" stroke="#222" strokeWidth="3" strokeDasharray="2 3" />
          <path d="M28 0h8v4h-8z" fill="#333" /><path d="M16 16h22" stroke="#3e8a78" strokeWidth="3" /><path d="M16 22h36" stroke="#7aa6b8" strokeWidth="2" />
          <path d="M16 30h18v23H16z" fill="#93a63c" /><path d="M34 30h18v23H34z" fill="#9b5a32" /><circle cx="43" cy="41" r="6" fill="#e0b07a" />
        </>)} />
        <DockIcon name="Trash" art={(<>
          <path d="M5 6h54l-7 52c-1 7-39 7-40 0Z" fill="#e2e2e2" /><path d="M14 14h36l-4 42c-6 4-22 4-28 0Z" fill="#d3d6d8" />
          <ellipse cx="32" cy="7" rx="27" ry="5" fill="#b9b4aa" stroke="#f1f1f1" strokeWidth="2.500" />
        </>)} />
      </div>
    </footer>
  );
}

export default function App() {
  return (
    <div className="flex min-h-screen flex-col bg-[#2e211c] font-[Inter,sans-serif]">
      <MenuBar />
      <BrowserChrome />
      <DocHeader />
      <Toolbar />
      <Canvas />
      <Dock />
    </div>
  );
}
